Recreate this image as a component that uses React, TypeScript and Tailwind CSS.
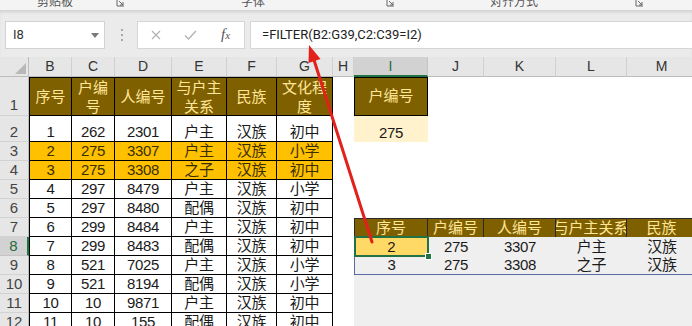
import React from "react";

const F = "font-['Liberation_Sans','Noto_Sans_CJK_SC',sans-serif]";

const data: (string | number)[][] = [
  [1, 262, 2301, "户主", "汉族", "初中"],
  [2, 275, 3307, "户主", "汉族", "小学"],
  [3, 275, 3308, "之子", "汉族", "初中"],
  [4, 297, 8479, "户主", "汉族", "小学"],
  [5, 297, 8480, "配偶", "汉族", "初中"],
  [6, 299, 8484, "户主", "汉族", "初中"],
  [7, 299, 8483, "配偶", "汉族", "初中"],
  [8, 521, 7025, "户主", "汉族", "小学"],
  [9, 521, 8194, "配偶", "汉族", "小学"],
  [10, 10, 9871, "户主", "汉族", "初中"],
  [11, 10, 155, "配偶", "汉族", "初中"],
];

const spillHead = ["序号", "户编号", "人编号", "与户主关系", "民族"];
const spill = [
  ["2", "275", "3307", "户主", "汉族"],
  ["3", "275", "3308", "之子", "汉族"],
];

const headers = ["序号", "户编号", "人编号", "与户主关系", "民族", "文化程度"];
const letters = ["B", "C", "D", "E", "F", "G", "H", "I", "J", "K", "L", "M"];

function RowHead({ n, sel }: { n: number; sel?: boolean }) {
  return (
    <div
      className={
        sel
          ? "flex items-end justify-center leading-[18px] text-[15px] bg-[#d2d2d2] border-b border-b-[#c4c4c4] border-r-2 border-r-[#217346] text-[#1e6b41]"
          : "flex items-end justify-center leading-[18px] text-[15px] bg-[#e6e6e6] border-b border-b-[#d2d2d2] border-r border-r-[#bcbcbc] text-[#444]"
      }
    >
      {n}
    </div>
  );
}

function Cell({ children, cls }: { children?: React.ReactNode; cls?: string }) {
  return (
    <div
      className={`flex items-end justify-center leading-[18px] text-[15px] tracking-[-0.3px] whitespace-nowrap overflow-hidden text-[#1a1a1a] ${cls ?? ""}`}
    >
      {children}
    </div>
  );
}

function SpillCols({ r }: { r: number }) {
  if (r === 2) {
    return (
      <>
        <Cell cls="bg-[#fff2cc]">275</Cell>
        <Cell />
        <Cell />
        <Cell />
        <Cell />
      </>
    );
  }
  if (r === 7) {
    return (
      <>
        {spillHead.map((h, i) => (
          <div
            key={h}
            className={`flex items-center justify-center text-[15px] leading-[18px] whitespace-nowrap overflow-hidden bg-[#7f6000] text-[#ffe699] border-t border-r border-[#2a2a2a] ${
              i === 0 ? "border-l" : ""
            }`}
          >
            {h}
          </div>
        ))}
      </>
    );
  }
  if (r === 8 || r === 9) {
    const row = spill[r - 8];
    return (
      <>
        {row.map((v, i) => {
          if (i === 0 && r === 8) {
            return (
              <div key={i} className="relative z-10 flex items-end justify-center leading-[18px] text-[15px] text-[#1a1a1a] bg-[#ffd966] border-l border-l-[#5b6aa6]">
                {v}
                <div className="absolute left-[-1px] top-[-1px] right-[-1px] bottom-[-1px] border-2 border-[#217346]" />
                <div className="absolute right-[-4px] bottom-[-4px] w-[7px] h-[7px] bg-[#217346] border border-white" />
              </div>
            );
          }
          const cls =
            "bg-[#efefef]" +
            (r === 9 ? " border-b border-b-[#5b6aa6]" : "") +
            (i === 0 ? " border-l border-l-[#5b6aa6]" : "");
          return (
            <Cell key={i} cls={cls}>
              {v}
            </Cell>
          );
        })}
      </>
    );
  }
  if (r >= 10) {
    return (
      <>
        <Cell cls="bg-[#efefef]" />
        <Cell cls="bg-[#efefef]" />
        <Cell cls="bg-[#efefef]" />
        <Cell cls="bg-[#efefef]" />
        <Cell cls="bg-[#efefef]" />
      </>
    );
  }
  return (
    <>
      <Cell />
      <Cell />
      <Cell />
      <Cell />
      <Cell />
    </>
  );
}

function Launcher() {
  return (
    <svg width="10" height="10" viewBox="0 0 10 10" className="shrink-0">
      <path d="M1 1 L1 8 L8 8" fill="none" stroke="#666" strokeWidth="1" />
      <path d="M3 3 L7 7 M7 4 L7 7 L4 7" fill="none" stroke="#666" strokeWidth="1" />
    </svg>
  );
}

export default function App() {
  return (
    <div className={`relative w-[692px] h-[326px] overflow-hidden bg-white ${F}`}>
      {/* ribbon bottom strip */}
      <div className="h-[11px] bg-[#f4f4f4] border-b border-[#d4d4d4] overflow-hidden flex items-end pb-[1px] text-[12px] text-[#555]">
        <span className="shrink-0 ml-[37px] leading-[14px] h-[14px]">剪贴板</span>
        <span className="shrink-0 ml-[43px] mb-[1px]"><Launcher /></span>
        <span className="shrink-0 ml-[115px] leading-[14px] h-[14px]">字体</span>
        <span className="shrink-0 ml-[121px] mb-[1px]"><Launcher /></span>
        <span className="shrink-0 ml-[94px] leading-[14px] h-[14px]">对齐方式</span>
        <span className="shrink-0 ml-[97px] mb-[1px]"><Launcher /></span>
      </div>

      {/* formula bar */}
      <div className="h-[46px] bg-[#ebebeb] shadow-[inset_0_2px_2px_rgba(0,0,0,0.07)] flex items-start pt-[10px]">
        <div className="ml-[5px] w-[100px] h-[28px] bg-white border border-[#d2d2d2] flex items-center justify-between pl-[7px] pr-[5px]">
          <span className="font-['Roboto',sans-serif] text-[13px] text-[#333]">I8</span>
          <svg width="8" height="5" viewBox="0 0 8 5">
            <path d="M0 0 L8 0 L4 5 Z" fill="#7a7a7a" />
          </svg>
        </div>
        <div className="ml-[16px] mt-[8px] flex flex-col gap-[3px]">
          <div className="w-[2px] h-[2px] bg-[#a8a8a8]" />
          <div className="w-[2px] h-[2px] bg-[#a8a8a8]" />
          <div className="w-[2px] h-[2px] bg-[#a8a8a8]" />
        </div>
        <div className="ml-[14px] w-[108px] h-[28px] bg-white border border-[#d6d6d6] flex items-center pl-[13px]">
          <svg width="10" height="10" viewBox="0 0 10 10">
            <path d="M1 1 L9 9 M9 1 L1 9" stroke="#b4b4b4" strokeWidth="1.3" fill="none" />
          </svg>
          <svg width="13" height="10" viewBox="0 0 13 10" className="ml-[23px]">
            <path d="M1 5.5 L4.5 9 L12 1" stroke="#b4b4b4" strokeWidth="1.4" fill="none" />
          </svg>
          <span className="ml-[24px] italic font-['Liberation_Serif',serif] text-[15px] leading-[15px] text-[#555]">
            f<span className="text-[11px]">x</span>
          </span>
        </div>
        <div className="ml-[5px] flex-1 h-[28px] bg-white border border-[#d6d6d6] border-r-0 flex items-center pl-[11px] font-['Roboto',sans-serif] text-[13px] text-[#222]">
          =FILTER(B2:G39,C2:C39=I2)
        </div>
      </div>

      {/* sheet grid */}
      <div className="grid grid-cols-[29px_43px_43px_57px_55px_50px_56px_21px_74px_56px_72px_71px_70px] grid-rows-[20px_39px_26px_repeat(10,19px)]">
        {/* column headers */}
        <div className="relative bg-[#e6e6e6] border-r border-b border-r-[#bcbcbc] border-b-[#bcbcbc]">
          <svg width="11" height="11" viewBox="0 0 11 11" className="absolute right-[2px] bottom-[2px]">
            <path d="M11 0 L11 11 L0 11 Z" fill="#b8b8b8" />
          </svg>
        </div>
        {letters.map((l) => (
          <div
            key={l}
            className={
              l === "I"
                ? "flex items-center justify-center text-[14px] bg-[#d2d2d2] border-r border-r-[#c4c4c4] border-b-2 border-b-[#217346] text-[#1e6b41]"
                : "flex items-center justify-center text-[14px] bg-[#e6e6e6] border-r border-r-[#d0d0d0] border-b border-b-[#bcbcbc] text-[#333]"
            }
          >
            {l}
          </div>
        ))}

        {/* row 1 */}
        <div className="flex items-end justify-center pb-[1px] leading-[18px] text-[15px] bg-[#e6e6e6] border-b border-b-[#d2d2d2] border-r border-r-[#bcbcbc] text-[#444]">
          1
        </div>
        {headers.map((h, i) => (
          <div
            key={h}
            className={`flex items-center justify-center text-center text-[15px] leading-[19px] bg-[#7f6000] text-[#ffe699] border-t border-r border-b border-black ${
              i === 0 ? "border-l" : ""
            }`}
          >
            {h}
          </div>
        ))}
        <div />
        <div className="flex items-center justify-center text-[15px] bg-[#7f6000] text-[#ffe699] border border-black">
          户编号
        </div>
        <div />
        <div />
        <div />
        <div />

        {/* rows 2-12 */}
        {data.map((row, idx) => {
          const r = idx + 2;
          const orange = r === 3 || r === 4;
          return (
            <React.Fragment key={r}>
              <RowHead n={r} sel={r === 8} />
              {row.map((v, i) => (
                <Cell
                  key={i}
                  cls={`border-r border-b border-black ${i === 0 ? "border-l" : ""} ${
                    orange ? "bg-[#ffc000] text-[#3a2f00]" : "bg-white"
                  }`}
                >
                  {v}
                </Cell>
              ))}
              <div />
              <SpillCols r={r} />
            </React.Fragment>
          );
        })}
      </div>

      {/* red arrow annotation */}
      <svg
        className="absolute left-0 top-0 pointer-events-none z-20"
        width="692"
        height="326"
        viewBox="0 0 692 326"
      >
        <line x1="372" y1="242" x2="314" y2="60" stroke="#e3201b" strokeWidth="3" strokeLinecap="round" />
        <polygon points="309,45 320.5,59 308.5,63" fill="#e3201b" />
      </svg>
    </div>
  );
}
